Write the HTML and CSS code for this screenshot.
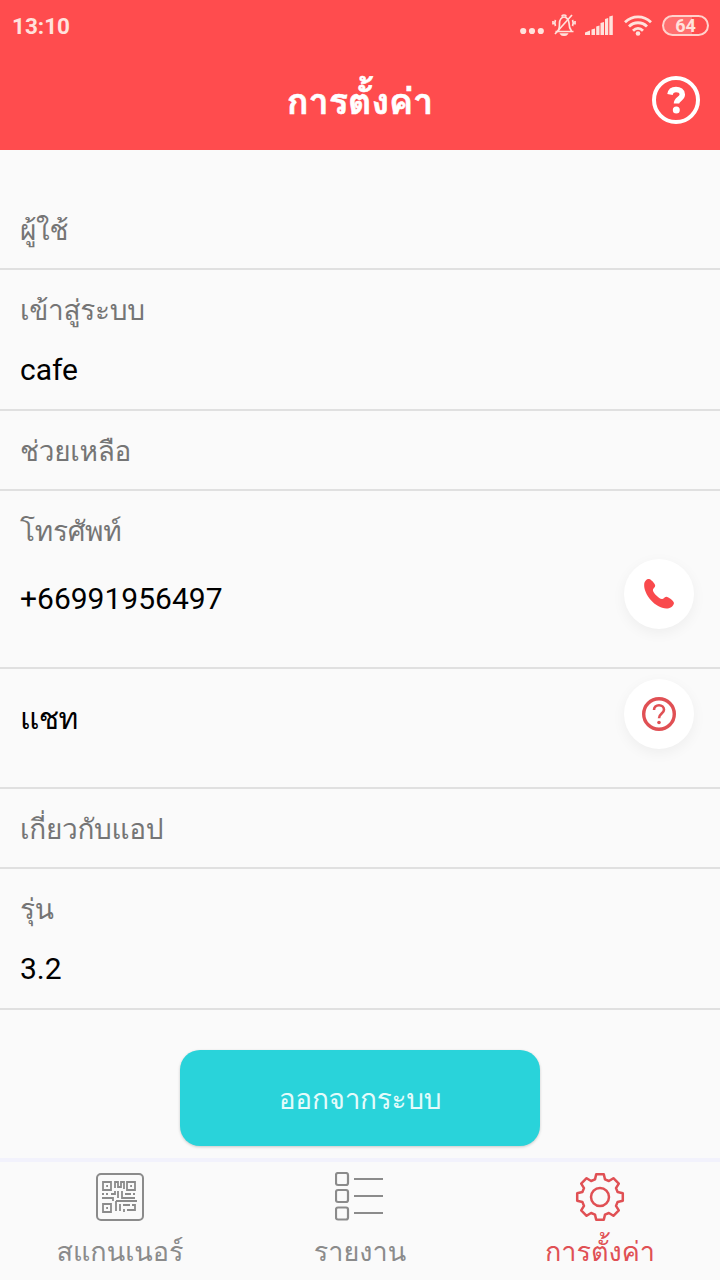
FILE: index.html
```html
<!DOCTYPE html>
<html lang="th">
  <head>
    <meta charset="UTF-8" />
    <meta name="viewport" content="width=device-width, initial-scale=1.0" />
    <title>การตั้งค่า</title>
    <link rel="stylesheet" href="styles.css">
  </head>
  <body>
    <header class="header">
      <div class="status-bar">
        <span class="clock">13:10</span>
        <div class="status-icons">
          <svg class="dots" width="24" height="8" viewBox="0 0 24 8" fill="currentColor">
            <circle cx="3.2" cy="4" r="3.1" />
            <circle cx="12" cy="4" r="3.1" />
            <circle cx="20.8" cy="4" r="3.1" />
          </svg>
          <svg class="bell" width="26" height="24" viewBox="0 0 26 24" fill="none" stroke="currentColor" stroke-width="1.7">
            <path d="M4.500 18.500h18M7 18c1.500-2 1.500-4 1.500-8 0-3 2-6 4.500-6s5 3 5 6c0 4 1 6 2.500 8M11 3.500c0-2 4-2 4 0" />
            <path d="M21 2 4 21" />
            <path d="M4.500 7c-1 2-1 4 0 6M2 8v3.500M21.500 7c1 2 1 4 0 6M24 8v3.500" />
            <path d="M10 21c1 1.500 5 1.500 6 0z" fill="currentColor" />
          </svg>
          <svg class="signal" width="28" height="20" viewBox="0 0 28 20" fill="currentColor">
            <path d="M0 20v-2.500l5-2V20zM6.500 14.500l3.500-1V20H6.500zM11.200 11.500l3.300-1V20h-3.300zM15.500 8l3.500-1V20h-3.500zM20 4l3.200-1v17H20zM24.300 1.500l3.500-1V20h-3.500z" />
          </svg>
          <svg class="wifi" width="28" height="21" viewBox="0 0 28 21" fill="none" stroke="currentColor" stroke-width="2.800">
            <path d="M1 7.200c7.500-7 18.500-7 26 0M5 11.500c5-5 13-5 18 0M9 15.700c3-3 7-3 10 0" />
            <circle cx="14" cy="18.500" r="2.300" fill="currentColor" stroke="none" />
          </svg>
          <span class="battery">64</span>
        </div>
      </div>
      <div class="title-bar">
        <h1>การตั้งค่า</h1>
        <svg class="help" width="48" height="48" viewBox="0 0 48 48" fill="none" stroke="#fff">
          <circle cx="24" cy="24" r="22" stroke-width="4" />
          <path d="M18 18.500c.5-3.500 3-5 6-5 3.500 0 6.300 1.800 6.300 5 0 4.500-5.800 4.500-5.800 9" stroke-width="5.500" />
          <circle cx="24.300" cy="34" r="3.500" fill="#fff" stroke="none" />
        </svg>
      </div>
    </header>

    <main class="settings">
      <section class="row heading first">
        <p class="label">ผู้ใช้</p>
      </section>
      <section class="row detail">
        <p class="label">เข้าสู่ระบบ</p>
        <p class="value">cafe</p>
      </section>
      <section class="row heading">
        <p class="label">ช่วยเหลือ</p>
      </section>
      <section class="row phone">
        <p class="label">โทรศัพท์</p>
        <div class="contact">
          <p class="value">+66991956497</p>
          <button class="round-btn" type="button">
            <svg width="32" height="32" viewBox="0 0 32 32" fill="#f94a4d">
              <path d="M1.200 6C1.500 3 4 .8 6.200 1.100c1.500.2 6 4.500 6 6.700 0 2-2.500 2.800-2.300 4.500.3 2.800 6 8.400 9 8.800 1.800.2 2.300-2.200 4.300-2.300 2.200-.1 7.400 4.200 7.700 5.900.4 2.300-3 5.500-6.200 5.700C13.500 31.600.2 16.500 1.200 6z" />
            </svg>
          </button>
        </div>
      </section>
      <section class="row chat">
        <div class="contact">
          <p class="value">แชท</p>
          <button class="round-btn" type="button">
            <svg width="34" height="34" viewBox="0 0 34 34" fill="none" stroke="#e05054">
              <circle cx="17" cy="17" r="15.300" stroke-width="3.400" />
              <path d="M12 13c0-3 2.200-4.800 5-4.800s5 1.800 5 4.500c0 3.800-5 4-5 8.500" stroke-width="2.600" />
              <circle cx="17" cy="25.500" r="1.800" fill="#e05054" stroke="none" />
            </svg>
          </button>
        </div>
      </section>
      <section class="row heading">
        <p class="label">เกี่ยวกับแอป</p>
      </section>
      <section class="row detail">
        <p class="label">รุ่น</p>
        <p class="value">3.2</p>
      </section>
      <button class="logout" type="button">ออกจากระบบ</button>
    </main>

    <nav class="tabs">
      <a class="tab">
        <svg width="50" height="50" viewBox="0 0 50 50" fill="none" stroke="currentColor" stroke-width="1.800">
          <rect x="2" y="2" width="46" height="46" rx="4" stroke-width="2" />
          <path d="M8 10h8v8H8zM32 10h8v8h-8zM8 32h8v8H8z" />
          <path d="M11.200 14h1.800M35.200 14H37M11.200 36H13M20 16V9M20 10h3v5h3V9M26 10h3v7" />
          <path d="M7 22h2M11 22h2M16 22h4v-3M23 19v7M27 19v7h13M30 22h6M38 22h2M7 26h11v3M21 29h21M21 29v10M25 32v7M28 33h7M37 33h3v5h-8M29 37v3" />
        </svg>
        <span>สแกนเนอร์</span>
      </a>
      <a class="tab">
        <svg width="50" height="50" viewBox="0 0 50 50" fill="none" stroke="currentColor" stroke-width="2.200">
          <rect x="1" y="1" width="12" height="12" rx="2" />
          <rect x="1" y="18" width="12" height="12" rx="2" />
          <rect x="1" y="35.500" width="12" height="12" rx="2" />
          <path d="M19 7h29M19 24h29M19 41h29" />
        </svg>
        <span>รายงาน</span>
      </a>
      <a class="tab active">
        <svg width="50" height="50" viewBox="-25 -25 50 50" fill="none" stroke="currentColor" stroke-width="2.500" stroke-linejoin="round">
          <circle r="9" />
          <path d="M-5-17.600-3.800-22.800H3.800L5-17.600 8.900-16 13.400-18.800 18.800-13.400 16-8.900 17.600-5 22.800-3.800V3.800L17.600 5 16 8.900 18.800 13.400 13.400 18.800 8.900 16 5 17.600 3.800 22.800H-3.800L-5 17.600-8.900 16-13.400 18.800-18.800 13.400-16 8.900-17.600 5-22.800 3.800V-3.800L-17.600-5-16-8.900-18.800-13.400-13.400-18.800-8.900-16z" />
        </svg>
        <span>การตั้งค่า</span>
      </a>
    </nav>
  </body>
</html>
```
FILE: styles.css
```css
* {
  box-sizing: border-box;
}

body {
  margin: 0;
  height: 1280px;
  display: flex;
  flex-direction: column;
  overflow: hidden;
  background-color: #fafafa;
  font-family: Roboto, Waree, Loma, Garuda, sans-serif;
}

h1,
p {
  margin: 0;
}

button {
  border: none;
  padding: 0;
  font-family: inherit;
}

.header {
  height: 150px;
  background-color: #ff4c4e;
  color: #fff;
}

.status-bar {
  height: 50px;
  padding: 0 11px 0 12px;
  display: flex;
  align-items: center;
  justify-content: space-between;
  color: #ffe2dc;
}

.clock {
  font-size: 22.5px;
  font-weight: 700;
  padding-top: 2px;
}

.status-icons {
  display: flex;
  align-items: center;
}

.dots {
  margin: 12px 7px 0 0;
}

.bell {
  margin-right: 8px;
}

.signal {
  margin-right: 11px;
}

.wifi {
  margin-right: 10px;
}

.battery {
  width: 47px;
  height: 21px;
  border: 2px solid #ffd2cc;
  border-radius: 11px;
  background: linear-gradient(90deg, #ff6f6f 64%, #ff4c4e 64%);
  font-size: 18px;
  font-weight: 700;
  line-height: 17px;
  text-align: center;
}

.title-bar {
  height: 100px;
  padding: 0 20px 0 68px;
  display: flex;
  align-items: center;
}

.title-bar h1 {
  flex: 1;
  padding-top: 4px;
  font-size: 36px;
  font-weight: 700;
  line-height: 50px;
  text-align: center;
  -webkit-text-stroke: 0.6px #fff;
}

.settings {
  flex: 1;
  display: flex;
  flex-direction: column;
}

.row {
  padding: 21px 20px 0;
  border-bottom: 2px solid #e0e0e0;
}

.label {
  font-size: 28px;
  line-height: 40px;
  letter-spacing: -0.3px;
  color: #757575;
}

.value {
  font-size: 30px;
  line-height: 40px;
  color: #000;
}

.heading {
  height: 80px;
}

.first {
  height: 120px;
  padding-top: 61px;
}

.detail {
  height: 141px;
}

.detail .value {
  margin-top: 19px;
}

.phone {
  height: 178px;
}

.contact {
  display: flex;
  justify-content: space-between;
  align-items: flex-start;
  padding-right: 6px;
}

.phone .contact {
  margin-top: 7px;
}

.phone .value {
  margin-top: 20px;
}

.chat {
  height: 120px;
  padding-top: 10px;
}

.chat .value {
  margin-top: 20px;
  letter-spacing: -0.6px;
}

.round-btn {
  width: 70px;
  height: 70px;
  display: flex;
  align-items: center;
  justify-content: center;
  border-radius: 50%;
  background-color: #fff;
  box-shadow: 0 4px 14px rgba(0, 0, 0, 0.05);
}

.logout {
  width: 360px;
  height: 96px;
  margin: 40px auto 0;
  padding-top: 4px;
  border-radius: 20px;
  background-color: #29d3da;
  box-shadow: 0 1px 3px rgba(0, 0, 0, 0.2);
  color: #e4fbfb;
  font-size: 28px;
  line-height: 92px;
  letter-spacing: -0.3px;
}

.tabs {
  height: 122px;
  display: flex;
  border-top: 4px solid #f2f2fc;
}

.tab {
  flex: 1;
  display: flex;
  flex-direction: column;
  align-items: center;
  padding-top: 10px;
  color: #8b8b8b;
  font-size: 27px;
  line-height: 40px;
}

.tab span {
  margin-top: 10px;
}

.tab.active {
  color: #e05054;
}
```
